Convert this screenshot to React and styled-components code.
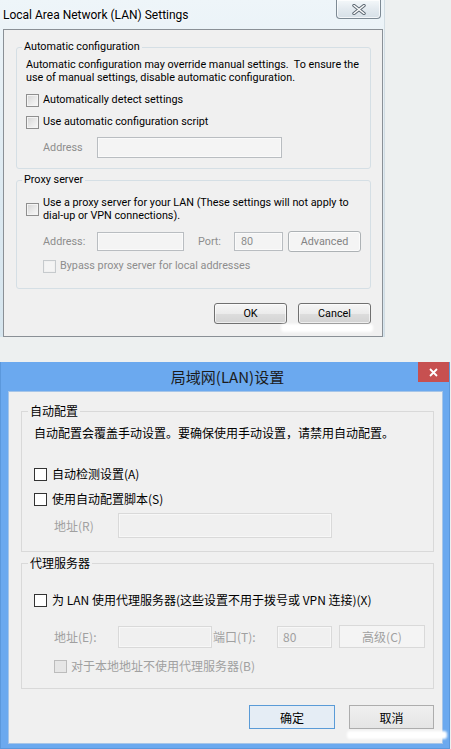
import React from 'react';
import styled, { createGlobalStyle } from 'styled-components';

const Global = createGlobalStyle`
  html, body { margin: 0; padding: 0; }
  body { background: #edf0f0; width: 451px; height: 749px; overflow: hidden; }
  * { box-sizing: border-box; }
`;

const EN = `Roboto, "Liberation Sans", sans-serif`;
const CN = `"Noto Sans CJK SC", "Noto Sans", sans-serif`;

const Page = styled.div`
  width: 451px;
  height: 749px;
  display: flex;
  flex-direction: column;
  align-items: flex-start;
  background: #edf0f0;
  position: relative;
  overflow: hidden;
`;

/* ---------- Classic (Win7 glass) dialog ---------- */
const GlassWindow = styled.div`
  width: 385px;
  padding: 0 2px 0 3px;
  background: linear-gradient(180deg, #eef5f9 0%, #dce9f1 60%, #d6e5ee 100%);
  border-right: 1px solid #d2dde3;
  display: flex;
  flex-direction: column;
  font-family: ${EN};
`;

const GlassTitleBar = styled.div`
  height: 29px;
  display: flex;
  justify-content: space-between;
  align-items: flex-start;
`;

const GlassTitle = styled.div`
  padding-top: 7px;
  font-size: 12px;
  line-height: 16px;
  color: #000;
  text-shadow: 0 0 6px #fff, 0 0 3px #fff;
`;

const GlassClose = styled.div`
  width: 45px;
  height: 19px;
  margin-right: 1px;
  border: 1px solid #7d8a94;
  border-top: none;
  border-radius: 0 0 4px 4px;
  background: linear-gradient(180deg, #f4f8fa 0%, #e3eaef 50%, #d6e0e7 100%);
  box-shadow: inset 0 0 0 1px rgba(255,255,255,0.7);
  display: flex;
  align-items: center;
  justify-content: center;
`;

const ClassicClient = styled.div`
  width: 380px;
  height: 308px;
  border: 1px solid #8a9096;
  background: #f0f0f0;
  padding: 0 11px 0 12px;
  display: flex;
  flex-direction: column;
  color: #000;
  font-size: 10.8px;
`;

/* ---------- Modern (Win8) dialog ---------- */
const ModernWindow = styled.div`
  width: 450px;
  height: 387px;
  margin-top: 25px;
  padding: 0 6px 4px 7px;
  background: #6ba9ef;
  border: 1px solid #5b98dc;
  border-top: none;
  display: flex;
  flex-direction: column;
  font-family: ${CN};
`;

const ModernTitleBar = styled.div`
  height: 29px;
  margin: 0 -6px 0 -7px;
  display: flex;
  align-items: flex-start;
`;

const ModernTitle = styled.div`
  flex: 1;
  padding-left: 36px;
  text-align: center;
  font-size: 15px;
  line-height: 29px;
  color: #1c1c1c;
`;

const ModernClose = styled.div`
  width: 31px;
  height: 20px;
  margin-right: 0px;
  background: #c75050;
  display: flex;
  align-items: center;
  justify-content: center;
`;

const ModernClient = styled.div`
  flex: 1;
  border: 1px solid #a6c5e8;
  background: #f0f0f0;
  padding: 0 8px 0 12px;
  display: flex;
  flex-direction: column;
  color: #000;
  font-size: 12px;
`;

/* ---------- Shared parts ---------- */
const Group = styled.fieldset`
  margin: ${p => p.$mt}px 0 0 0;
  padding: 0;
  min-width: 0;
  border: 1px solid ${p => (p.$modern ? '#d9d9d9' : '#d5dfe5')};
  border-radius: ${p => (p.$modern ? 0 : 3)}px;
  height: ${p => p.$h}px;
`;

const Legend = styled.legend`
  margin-left: ${p => (p.$modern ? 6 : 5)}px;
  padding: 0 2px;
  font-size: ${p => (p.$modern ? 12 : 10.8)}px;
  line-height: ${p => (p.$modern ? 16 : 14)}px;
  color: #000;
`;

const GroupBody = styled.div`
  display: flex;
  flex-direction: column;
  padding: ${p => p.$pad};
`;

const Text = styled.div`
  margin-top: ${p => p.$mt || 0}px;
  line-height: ${p => p.$lh}px;
  white-space: nowrap;
`;

const CheckRow = styled.label`
  display: flex;
  align-items: center;
  gap: ${p => p.$gap}px;
  margin-top: ${p => p.$mt || 0}px;
  margin-left: ${p => p.$indent || 0}px;
  line-height: ${p => p.$lh}px;
  color: ${p => (p.$disabled ? p.$dim : 'inherit')};
  white-space: nowrap;
`;

const Box = styled.span`
  flex: none;
  width: 13px;
  height: 13px;
  ${p =>
    p.$modern
      ? `border: 1px solid ${p.$disabled ? '#bcbcbc' : '#333'};
         background: ${p.$disabled ? '#e6e6e6' : '#fff'};`
      : `border: 1px solid ${p.$disabled ? '#c6cacd' : '#8f8f8f'};
         background: ${p.$disabled ? '#f4f4f4' : 'linear-gradient(135deg, #d4d4d4 0%, #ececec 60%, #f8f8f8 100%)'};
         box-shadow: inset 0 0 0 1px ${p.$disabled ? '#f0f0f0' : '#f4f4f4'};`}
`;

const FieldRow = styled.div`
  display: flex;
  align-items: center;
  margin-top: ${p => p.$mt}px;
  margin-left: ${p => p.$indent}px;
`;

const FieldLabel = styled.span`
  width: ${p => p.$w}px;
  flex: none;
  color: ${p => p.$color};
  white-space: nowrap;
`;

const Field = styled.div`
  flex: none;
  width: ${p => p.$w}px;
  height: ${p => p.$h}px;
  margin-right: ${p => p.$mr || 0}px;
  border: 1px solid ${p => (p.$modern ? '#d9d9d9' : '#b9bdc1')};
  background: ${p => (p.$modern ? '#f0f0f0' : '#f4f4f4')};
  box-shadow: inset 0 0 0 1px ${p => (p.$modern ? '#f7f7f7' : '#fafafa')};
  color: ${p => p.$color};
  padding-left: ${p => (p.$modern ? 5 : 6)}px;
  display: flex;
  align-items: center;
`;

const Btn = styled.div`
  flex: none;
  width: ${p => p.$w}px;
  height: ${p => p.$h}px;
  display: flex;
  align-items: center;
  justify-content: center;
  ${p =>
    p.$modern
      ? `border: 1px solid ${p.$disabled ? '#d9d9d9' : p.$primary ? '#5a9bd7' : '#adadad'};
         background: ${p.$disabled ? '#f4f4f4' : p.$primary ? '#e5edf5' : 'linear-gradient(180deg, #f0f0f0, #e5e5e5)'};
         color: ${p.$disabled ? '#a0a0a0' : '#000'};`
      : `border: 1px solid ${p.$disabled ? '#adb2b5' : '#707070'};
         border-radius: 3px;
         background: ${p.$disabled ? '#f4f4f4' : 'linear-gradient(180deg, #f6f6f6 0%, #ebebeb 50%, #dddddd 51%, #d3d3d3 100%)'};
         box-shadow: inset 0 0 0 1px ${p.$disabled ? '#fbfbfb' : 'rgba(255,255,255,0.6)'};
         color: ${p.$disabled ? '#838383' : '#000'};`}
`;

const ButtonRow = styled.div`
  display: flex;
  justify-content: flex-end;
  gap: ${p => p.$gap}px;
  margin-top: ${p => p.$mt}px;
  margin-right: ${p => p.$mr || 0}px;
`;

const Smudge = styled.div`
  position: absolute;
  background: #fff;
  border-radius: 3px;
  filter: blur(1px);
`;

const GlassX = () => (
  <svg width="14" height="11" viewBox="0 0 14 11">
    <path d="M2 1.5 L12 9.5 M12 1.5 L2 9.5" stroke="#5a6670" strokeWidth="3.4" strokeLinecap="round" />
    <path d="M2 1.5 L12 9.5 M12 1.5 L2 9.5" stroke="#fdfdfd" strokeWidth="1.6" strokeLinecap="round" />
  </svg>
);

const ModernX = () => (
  <svg width="9" height="9" viewBox="0 0 9 9">
    <path d="M1 1 L8 8 M8 1 L1 8" stroke="#fff" strokeWidth="1.8" />
  </svg>
);

const EN_DIM = '#8d8d8d';
const CN_DIM = '#a0a0a0';

export default function App() {
  return (
    <>
      <Global />
      <Page>
        <GlassWindow>
          <GlassTitleBar>
            <GlassTitle>Local Area Network (LAN) Settings</GlassTitle>
            <GlassClose>
              <GlassX />
            </GlassClose>
          </GlassTitleBar>
          <ClassicClient>
            <Group $mt={10} $h={129}>
              <Legend>Automatic configuration</Legend>
              <GroupBody $pad="4px 10px 0 9px">
                <Text $lh={13}>
                  Automatic configuration may override manual settings.&nbsp; To ensure the
                  <br />
                  use of manual settings, disable automatic configuration.
                </Text>
                <CheckRow $mt={8} $gap={4} $lh={16}>
                  <Box />
                  Automatically detect settings
                </CheckRow>
                <CheckRow $mt={6} $gap={4} $lh={16}>
                  <Box />
                  Use automatic configuration script
                </CheckRow>
                <FieldRow $mt={7} $indent={17}>
                  <FieldLabel $w={54} $color={EN_DIM}>Address</FieldLabel>
                  <Field $w={185} $h={21} />
                </FieldRow>
              </GroupBody>
            </Group>
            <Group $mt={4} $h={116}>
              <Legend>Proxy server</Legend>
              <GroupBody $pad="9px 10px 0 9px">
                <CheckRow $gap={4} $lh={13}>
                  <Box />
                  <span>
                    Use a proxy server for your LAN (These settings will not apply to
                    <br />
                    dial-up or VPN connections).
                  </span>
                </CheckRow>
                <FieldRow $mt={9} $indent={17}>
                  <FieldLabel $w={54} $color={EN_DIM}>Address:</FieldLabel>
                  <Field $w={87} $h={19} $mr={14} />
                  <FieldLabel $w={36} $color={EN_DIM}>Port:</FieldLabel>
                  <Field $w={49} $h={19} $mr={5} $color={EN_DIM}>80</Field>
                  <Btn $w={73} $h={21} $disabled>Advanced</Btn>
                </FieldRow>
                <CheckRow $mt={6} $gap={4} $lh={16} $indent={17} $disabled $dim={EN_DIM}>
                  <Box $disabled />
                  Bypass proxy server for local addresses
                </CheckRow>
              </GroupBody>
            </Group>
            <ButtonRow $gap={11} $mt={14} $mr={0}>
              <Btn $w={73} $h={21}>OK</Btn>
              <Btn $w={73} $h={21}>Cancel</Btn>
            </ButtonRow>
          </ClassicClient>
        </GlassWindow>

        <ModernWindow>
          <ModernTitleBar>
            <ModernTitle>局域网(LAN)设置</ModernTitle>
            <ModernClose>
              <ModernX />
            </ModernClose>
          </ModernTitleBar>
          <ModernClient>
            <Group $modern $mt={11} $h={149}>
              <Legend $modern>自动配置</Legend>
              <GroupBody $pad="6px 10px 0 12px">
                <Text $lh={16}>自动配置会覆盖手动设置。要确保使用手动设置，请禁用自动配置。</Text>
                <CheckRow $mt={25} $gap={5} $lh={16}>
                  <Box $modern />
                  自动检测设置(A)
                </CheckRow>
                <CheckRow $mt={9} $gap={5} $lh={16}>
                  <Box $modern />
                  使用自动配置脚本(S)
                </CheckRow>
                <FieldRow $mt={6} $indent={20}>
                  <FieldLabel $w={64} $color={CN_DIM}>地址(R)</FieldLabel>
                  <Field $modern $w={214} $h={25} />
                </FieldRow>
              </GroupBody>
            </Group>
            <Group $modern $mt={3} $h={134}>
              <Legend $modern>代理服务器</Legend>
              <GroupBody $pad="21px 10px 0 12px">
                <CheckRow $gap={5} $lh={16}>
                  <Box $modern />
                  为 LAN 使用代理服务器(这些设置不用于拨号或 VPN 连接)(X)
                </CheckRow>
                <FieldRow $mt={17} $indent={20}>
                  <FieldLabel $w={64} $color={CN_DIM}>地址(E):</FieldLabel>
                  <Field $modern $w={94} $h={22} $mr={1} />
                  <FieldLabel $w={64} $color={CN_DIM}>端口(T):</FieldLabel>
                  <Field $modern $w={55} $h={22} $mr={7} $color={CN_DIM}>80</Field>
                  <Btn $modern $w={86} $h={23} $disabled>高级(C)</Btn>
                </FieldRow>
                <CheckRow $mt={10} $gap={4} $lh={16} $indent={20} $disabled $dim={CN_DIM}>
                  <Box $modern $disabled />
                  对于本地地址不使用代理服务器(B)
                </CheckRow>
              </GroupBody>
            </Group>
            <ButtonRow $gap={14} $mt={16} $mr={0}>
              <Btn $modern $primary $w={86} $h={24}>确定</Btn>
              <Btn $modern $w={85} $h={24}>取消</Btn>
            </ButtonRow>
          </ModernClient>
        </ModernWindow>

        <Smudge style={{ left: 281, top: 324, width: 92, height: 8 }} />
        <Smudge style={{ left: 347, top: 731, width: 100, height: 8 }} />
      </Page>
    </>
  );
}
